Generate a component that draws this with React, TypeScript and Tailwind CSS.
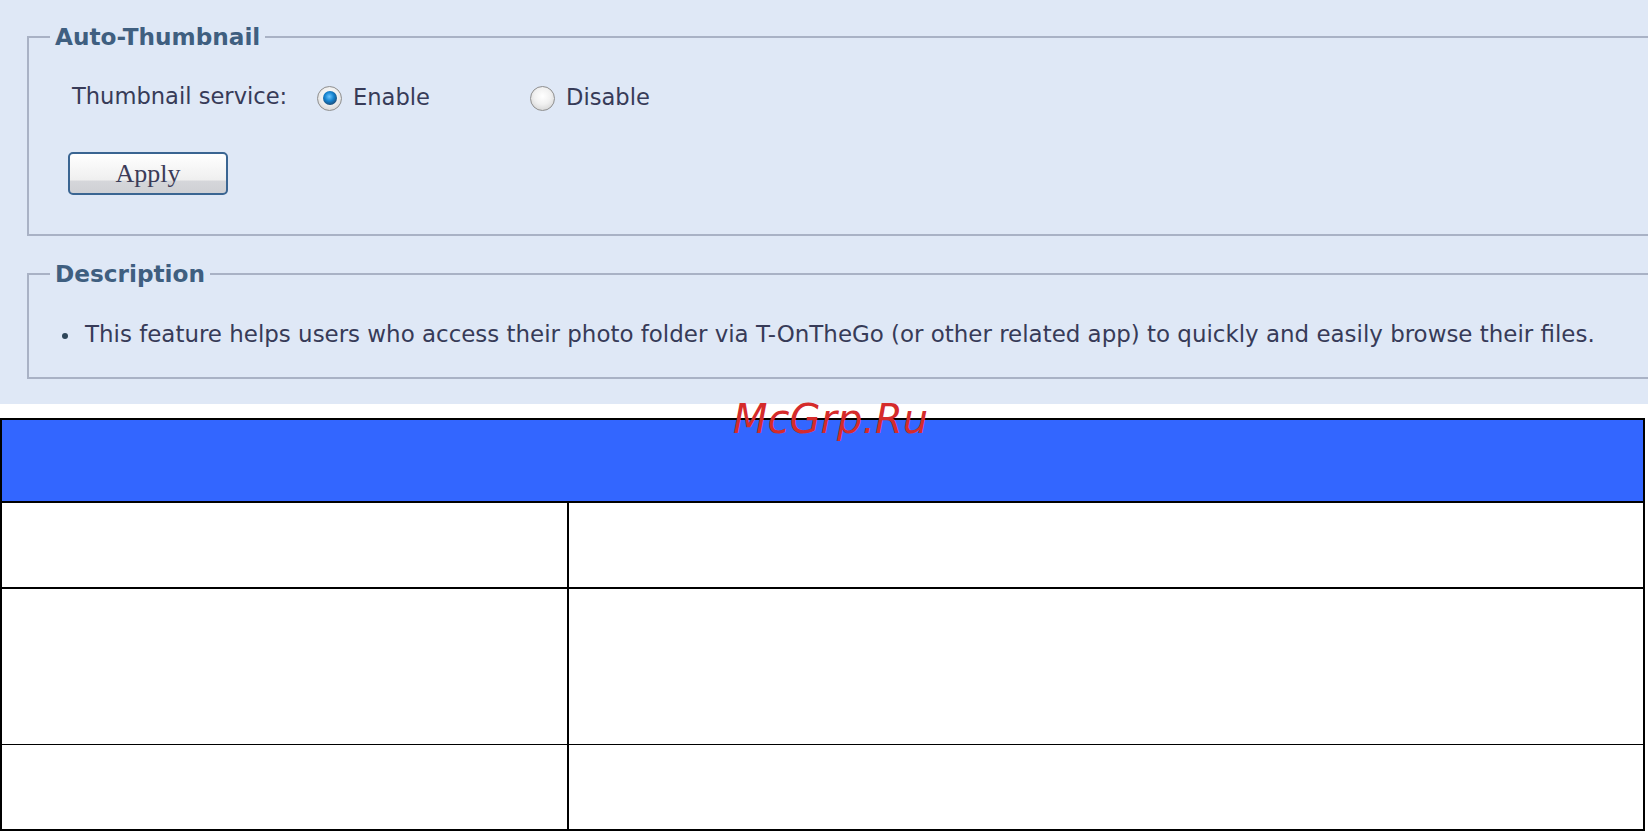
import React from "react";

// ---------------------------------------------------------------------------
// Auto-Thumbnail settings panel + empty spec table below it
// ---------------------------------------------------------------------------

const FONT = "font-['DejaVu_Sans',sans-serif]";
const LEGEND_CLASS =
  "ml-[21px] px-[5px] text-[23.2px] leading-[28px] font-bold text-[#3f5f80]";

function Radio({ checked }: { checked: boolean }) {
  return (
    <span className="w-[25px] h-[25px] mt-[2px] rounded-full border border-[#8f8f8f] bg-[radial-gradient(circle_at_50%_40%,#ffffff_0%,#f1f1f1_45%,#c9c9c9_100%)] flex items-center justify-center shrink-0">
      {checked && (
        <span className="w-[14px] h-[14px] rounded-full bg-[radial-gradient(circle_at_45%_40%,#6cc6ff_0%,#1583cf_40%,#1b4c78_75%,#1d2f44_100%)]" />
      )}
    </span>
  );
}

export default function App() {
  return (
    <div className={`bg-white h-[833px] overflow-hidden relative ${FONT}`}>
      {/* Settings area */}
      <div className="bg-[#dfe8f6] h-[404px] overflow-hidden pt-[23px]">
        <fieldset className="border-2 border-[#a9b2c5] ml-[27px] mr-[-20px] h-[213px]">
          <legend className={LEGEND_CLASS}>Auto-Thumbnail</legend>
          <div className="mt-[32px] h-[28px] pl-[43px] flex items-center text-[22.6px] text-[#373b58]">
            <span className="w-[245px]">Thumbnail service:</span>
            <label className="w-[213px] flex items-center gap-[11px]">
              <Radio checked />
              <span className="mt-[2px]">Enable</span>
            </label>
            <label className="flex items-center gap-[11px]">
              <Radio checked={false} />
              <span className="mt-[2px]">Disable</span>
            </label>
          </div>
          <button className="mt-[41px] ml-[39px] w-[160px] h-[43px] rounded-[5px] border-2 border-[#3a6592] bg-[linear-gradient(to_bottom,#ffffff_0%,#efefef_66%,#d5d6da_70%,#cfd0d4_100%)] font-['Liberation_Serif',serif] text-[26px] leading-none text-[#3b3b58] flex items-center justify-center">
            Apply
          </button>
        </fieldset>

        <fieldset className="border-2 border-[#a9b2c5] ml-[27px] mr-[-20px] mt-[24px] h-[119px]">
          <legend className={LEGEND_CLASS}>Description</legend>
          <div className="mt-[32px] h-[28px] pl-[33px] flex items-center text-[22.95px] text-[#373b58]">
            <span className="w-[6px] h-[6px] rounded-full bg-[#2e4659] mr-[17px] mt-[3px]" />
            <span>
              This feature helps users who access their photo folder via T-OnTheGo (or other related app) to quickly and easily browse their files.
            </span>
          </div>
        </fieldset>
      </div>

      {/* Table */}
      <div className="mt-[14px] w-[1645px] border-2 border-black">
        <div className="h-[83px] bg-[#3366ff] border-b-2 border-black" />
        <div className="h-[86px] flex border-b-2 border-black">
          <div className="w-[567px] border-r-2 border-black" />
          <div className="flex-1" />
        </div>
        <div className="h-[156px] flex border-b border-black">
          <div className="w-[567px] border-r-2 border-black" />
          <div className="flex-1" />
        </div>
        <div className="h-[84px] flex">
          <div className="w-[567px] border-r-2 border-black" />
          <div className="flex-1" />
        </div>
      </div>

      {/* Watermark */}
      <div className="absolute left-[733px] top-[399px] text-[40px] leading-none italic text-[#d52b2b] font-['DejaVu_Sans',sans-serif] pointer-events-none">
        McGrp.Ru
      </div>
    </div>
  );
}
